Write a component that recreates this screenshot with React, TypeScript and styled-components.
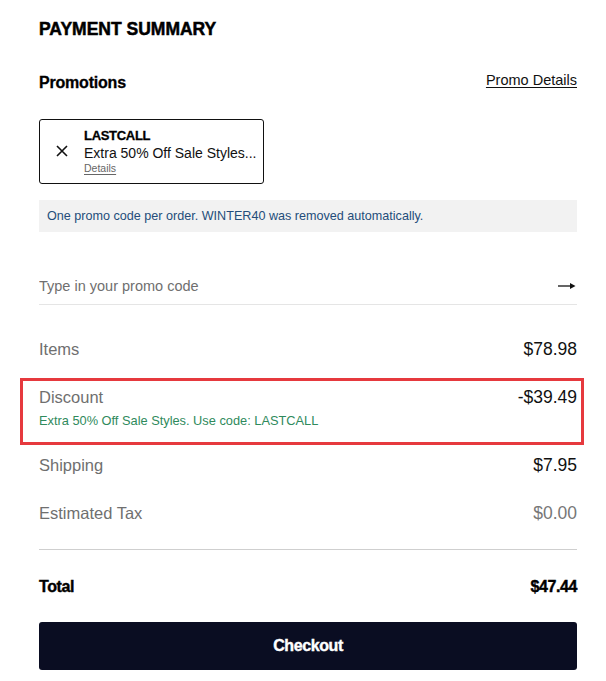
import React from 'react';
import styled, { createGlobalStyle } from 'styled-components';

const GlobalStyle = createGlobalStyle`
  body {
    margin: 0;
    background: #fff;
    font-family: 'Liberation Sans', Arial, sans-serif;
    color: #111;
  }
`;

const rows = [
  { label: 'Items', value: '$78.98' },
  { label: 'Shipping', value: '$7.95' },
  { label: 'Estimated Tax', value: '$0.00', muted: true },
];

const CloseIcon = () => (
  <svg width="12" height="12" viewBox="0 0 12 12">
    <path d="M1 1L11 11M11 1L1 11" stroke="#111" strokeWidth="1.6" />
  </svg>
);

const ArrowIcon = () => (
  <svg width="18" height="8" viewBox="0 0 18 8">
    <path d="M0 4H15" stroke="#111" strokeWidth="1.3" />
    <path d="M12 1L17.5 4L12 7Z" fill="#111" />
  </svg>
);

const App = () => {
  return (
    <>
      <GlobalStyle />
      <Summary>
        <Title>PAYMENT SUMMARY</Title>
        <PromoHeader>
          <SubTitle>Promotions</SubTitle>
          <PromoLink href="#">Promo Details</PromoLink>
        </PromoHeader>

        <PromoCard>
          <RemoveButton aria-label="Remove promo">
            <CloseIcon />
          </RemoveButton>
          <PromoText>
            <PromoCode>LASTCALL</PromoCode>
            <PromoDesc>Extra 50% Off Sale Styles...</PromoDesc>
            <PromoDetails href="#">Details</PromoDetails>
          </PromoText>
        </PromoCard>

        <InfoBanner>
          One promo code per order. WINTER40 was removed automatically.
        </InfoBanner>

        <PromoInputRow>
          <PromoInput placeholder="Type in your promo code" />
          <ArrowIcon />
        </PromoInputRow>

        <LineList>
          <LineRow>
            <LineLabel>{rows[0].label}</LineLabel>
            <LineValue>{rows[0].value}</LineValue>
          </LineRow>
          <DiscountRow>
            <LineRowInner>
              <LineLabel>Discount</LineLabel>
              <LineValue>-$39.49</LineValue>
            </LineRowInner>
            <DiscountNote>Extra 50% Off Sale Styles. Use code: LASTCALL</DiscountNote>
          </DiscountRow>
          {rows.slice(1).map((row) => (
            <LineRow key={row.label}>
              <LineLabel>{row.label}</LineLabel>
              <LineValue muted={row.muted}>{row.value}</LineValue>
            </LineRow>
          ))}
        </LineList>

        <Divider />

        <TotalRow>
          <span>Total</span>
          <span>$47.44</span>
        </TotalRow>

        <CheckoutButton>Checkout</CheckoutButton>
      </Summary>
    </>
  );
};

const Summary = styled.div`
  padding: 18px 29px 11px 39px;
  display: flex;
  flex-direction: column;
`;

const Title = styled.h2`
  margin: 0;
  font-size: 17.5px;
  line-height: 22px;
  font-weight: 900;
  letter-spacing: 0;
  color: #000;
  -webkit-text-stroke: 0.5px #000;
`;

const PromoHeader = styled.div`
  margin-top: 32px;
  display: flex;
  justify-content: space-between;
  align-items: center;
  height: 22px;
`;

const SubTitle = styled.h3`
  margin: 0;
  font-size: 16px;
  font-weight: 700;
  color: #000;
  letter-spacing: -0.2px;
  -webkit-text-stroke: 0.3px #000;
`;

const PromoLink = styled.a`
  font-size: 14.5px;
  color: #111;
  text-decoration: underline;
  text-underline-offset: 2px;
  margin-top: -6px;
`;

const PromoCard = styled.div`
  margin-top: 25px;
  width: 225px;
  box-sizing: border-box;
  border: 1px solid #111;
  border-radius: 3px;
  padding: 8px 10px 9px 16px;
  display: flex;
  align-items: center;
  gap: 16px;
`;

const RemoveButton = styled.button`
  border: none;
  background: none;
  padding: 0;
  display: flex;
  cursor: pointer;
`;

const PromoText = styled.div`
  display: flex;
  flex-direction: column;
`;

const PromoCode = styled.span`
  font-size: 13px;
  line-height: 16px;
  font-weight: 700;
  letter-spacing: -0.3px;
  color: #000;
  -webkit-text-stroke: 0.3px #000;
`;

const PromoDesc = styled.span`
  font-size: 14px;
  line-height: 18px;
  color: #111;
  white-space: nowrap;
`;

const PromoDetails = styled.a`
  font-size: 10.5px;
  line-height: 12px;
  color: #666;
  text-decoration: underline;
  text-underline-offset: 2px;
`;

const InfoBanner = styled.div`
  margin-top: 16px;
  height: 32px;
  display: flex;
  align-items: center;
  padding: 0 8px;
  background: #f2f2f2;
  font-size: 12.6px;
  color: #244d7a;
`;

const PromoInputRow = styled.div`
  margin-top: 36px;
  height: 36px;
  display: flex;
  align-items: center;
  border-bottom: 1px solid #e5e5e5;
  padding-right: 1px;
`;

const PromoInput = styled.input`
  flex: 1;
  border: none;
  outline: none;
  padding: 0;
  font-family: inherit;
  font-size: 14.5px;
  color: #111;
  background: transparent;

  &::placeholder {
    color: #6f6f6f;
  }
`;

const LineList = styled.div`
  margin-top: 20px;
  display: flex;
  flex-direction: column;
`;

const LineRowInner = styled.div`
  display: flex;
  justify-content: space-between;
  align-items: center;
  line-height: 20px;
`;

const LineRow = styled(LineRowInner)`
  padding: 14px 0;
`;

const DiscountRow = styled.div`
  position: relative;
  padding: 14px 0 12px;

  &::after {
    content: '';
    position: absolute;
    top: 5px;
    bottom: -4px;
    left: -19px;
    right: -7px;
    border: 3px solid #e6393e;
    pointer-events: none;
  }
`;

const LineLabel = styled.span`
  font-size: 16.5px;
  color: #6f6f6f;
`;

const LineValue = styled.span<{ muted?: boolean }>`
  font-size: 17.5px;
  color: ${({ muted }) => (muted ? '#777' : '#111')};
`;

const DiscountNote = styled.div`
  margin-top: 6px;
  font-size: 12.8px;
  line-height: 16px;
  color: #2f8a5c;
`;

const Divider = styled.hr`
  margin: 12px 0 0;
  border: none;
  border-top: 1px solid #cfcfcf;
`;

const TotalRow = styled.div`
  padding: 26px 0 24px;
  line-height: 22px;
  display: flex;
  justify-content: space-between;
  font-size: 16px;
  font-weight: 700;
  color: #000;
  letter-spacing: -0.4px;
  -webkit-text-stroke: 0.4px #000;
`;

const CheckoutButton = styled.button`
  height: 48px;
  border: none;
  border-radius: 3px;
  background: #0a0d22;
  color: #fff;
  font-family: inherit;
  font-size: 16px;
  font-weight: 700;
  letter-spacing: -0.4px;
  -webkit-text-stroke: 0.4px #fff;
  cursor: pointer;
`;

export default App;
